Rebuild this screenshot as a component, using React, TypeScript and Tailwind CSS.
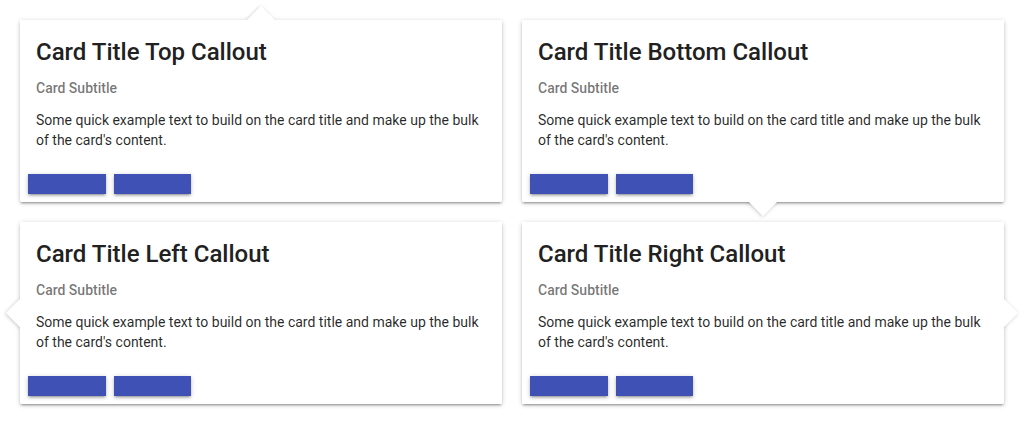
import type { ReactNode } from "react";

type Side = "top" | "bottom" | "left" | "right";

const CARD_SHADOW =
  "shadow-[0_2px_2px_0_rgba(0,0,0,0.14),0_3px_1px_-2px_rgba(0,0,0,0.12),0_1px_5px_0_rgba(0,0,0,0.2)]";

const ARROW_POSITION: Record<Side, string> = {
  top: "left-1/2 -top-[10px] -ml-[10px]",
  bottom: "left-1/2 -bottom-[10px] -ml-[10px]",
  left: "top-1/2 -left-[10px] -mt-[10px]",
  right: "top-1/2 -right-[10px] -mt-[10px]",
};

const cards: { title: string; side: Side }[] = [
  { title: "Card Title Top Callout", side: "top" },
  { title: "Card Title Bottom Callout", side: "bottom" },
  { title: "Card Title Left Callout", side: "left" },
  { title: "Card Title Right Callout", side: "right" },
];

function CalloutCard({ side, children }: { side: Side; children: ReactNode }) {
  return (
    <div className={`relative rounded-[2px] bg-white ${CARD_SHADOW}`}>
      <span
        className={`absolute h-5 w-5 rotate-45 bg-white ${ARROW_POSITION[side]} shadow-[0_1px_4px_0_rgba(0,0,0,0.22)]`}
      />
      <div className="absolute inset-0 rounded-[2px] bg-white" />
      <div className="relative">{children}</div>
    </div>
  );
}

export default function App() {
  return (
    <div className="grid grid-cols-2 gap-5 bg-white p-5 font-['Roboto',sans-serif]">
      {cards.map((card) => (
        <CalloutCard key={card.title} side={card.side}>
          <div className="px-4 pt-4 pb-4">
            <h2 className="text-2xl leading-8 font-medium text-[#212121]">{card.title}</h2>
            <p className="mt-2.5 text-sm leading-5 font-medium text-black/55">Card Subtitle</p>
            <p className="mt-3 text-sm leading-5 text-black/85">
              Some quick example text to build on the card title and make up the bulk of the card's content.
            </p>
          </div>
          <div className="flex gap-2 p-2">
            <button
              type="button"
              className={`h-5 w-[78px] bg-[#3f51b5] ${CARD_SHADOW}`}
              aria-label="Action"
            />
            <button
              type="button"
              className={`h-5 w-[77px] bg-[#3f51b5] ${CARD_SHADOW}`}
              aria-label="Action"
            />
          </div>
        </CalloutCard>
      ))}
    </div>
  );
}
